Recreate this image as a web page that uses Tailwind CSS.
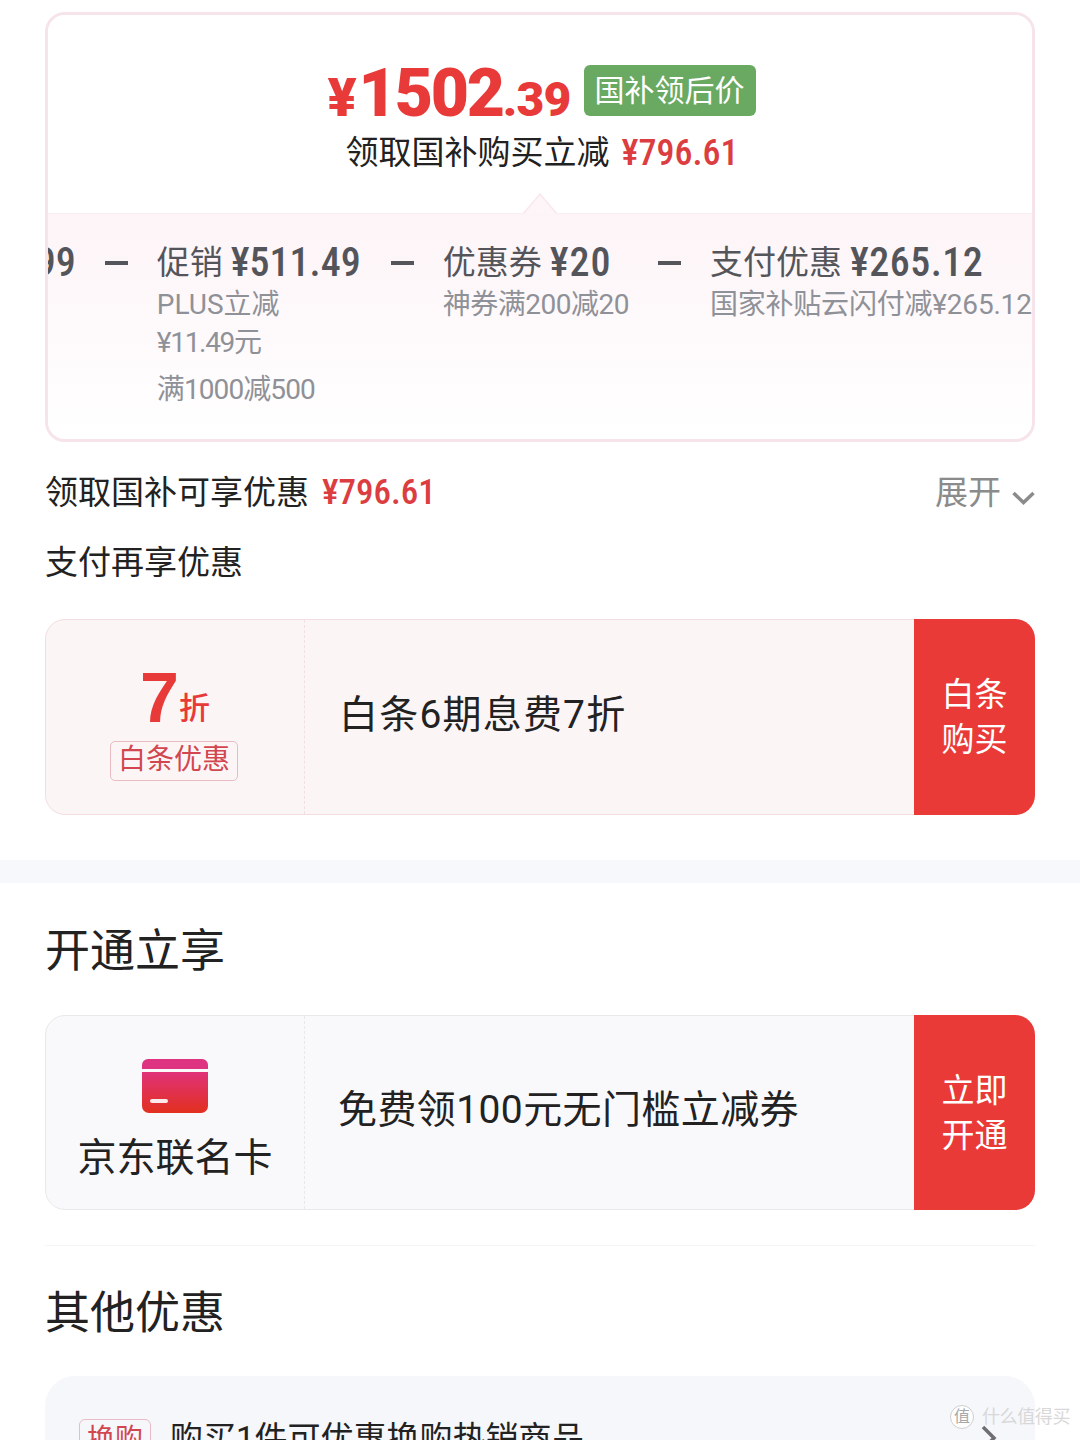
<!DOCTYPE html>
<html lang="zh">
  <head>
    <meta charset="UTF-8" />
    <meta name="viewport" content="width=device-width, initial-scale=1.0" />
    <title>优惠明细</title>
    <script src="https://cdn.jsdelivr.net/npm/@tailwindcss/browser@4"></script>
  </head>
  <body class="bg-white font-['Roboto','Noto_Sans_CJK_SC',sans-serif] text-[#222]">
    <div class="relative h-[1440px] overflow-hidden">

      <section class="px-[45px] pt-3">
        <!-- Price card -->
        <div class="h-[430px] rounded-[20px] border-[3px] border-[#f6e4ea] overflow-hidden">
          <div class="relative h-[199px] border-b border-[#fbeef2] bg-white">
            <div class="flex justify-center items-center gap-[13px] pt-[50px] pl-[3px] h-[101px]">
              <div class="flex items-baseline mt-[7px] font-black text-[#e83a38] leading-none">
                <span class="text-[54px] mr-[2px]">¥</span>
                <span class="text-[66px] tracking-[-2.2px]">1502</span>
                <span class="text-[48px] tracking-[-0.8px]">.39</span>
              </div>
              <span class="w-[172px] h-[51px] rounded-[6px] bg-[#69a962] text-white text-[30px] leading-[51px] text-center">国补领后价</span>
            </div>
            <div class="flex justify-center items-center gap-3 mt-[14px] h-[46px] text-[33px] pl-[4px]">
              <span>领取国补购买立减</span>
              <span class="text-[#dc3d40] font-medium text-[36px] font-['Roboto_Condensed','Roboto',sans-serif]">¥796.61</span>
            </div>
            <svg class="absolute left-[475px] bottom-[-1px]" width="34" height="21" viewBox="0 0 34 21">
              <path d="M0 21 L17 1 L34 21" fill="#fdf5f7" stroke="#f9e8ec" stroke-width="1.5" />
            </svg>
          </div>

          <div class="h-[228px] bg-gradient-to-b from-[#fdf4f7] to-white pt-[27px] overflow-hidden">
            <div class="flex gap-[29px] -ml-[71px] whitespace-nowrap">
              <div>
                <p class="h-[44px] leading-[44px] text-[40px] text-[#54555b] font-medium font-['Roboto_Condensed','Roboto',sans-serif]">¥1799</p>
              </div>
              <div class="w-[23px] h-[4px] mt-[20px] bg-[#54555b] shrink-0"></div>
              <div class="pr-[1px]">
                <p class="flex items-center gap-[8px] h-[44px] text-[33px] text-[#54555b]"><span>促销</span><span class="text-[40px] font-medium font-['Roboto_Condensed','Roboto',sans-serif]">¥511.49</span></p>
                <p class="mt-[1px] leading-[38px] text-[28px] text-[#8f9198]">PLUS立减</p>
                <p class="leading-[38px] text-[28px] tracking-[-1.3px] text-[#8f9198]">¥11.49元</p>
                <p class="mt-[9px] leading-[38px] text-[28px] tracking-[-0.9px] text-[#8f9198]">满1000减500</p>
              </div>
              <div class="w-[23px] h-[4px] mt-[20px] bg-[#54555b] shrink-0"></div>
              <div>
                <p class="flex items-center gap-[8px] h-[44px] text-[33px] text-[#54555b]"><span>优惠券</span><span class="text-[40px] font-medium tracking-[1px] font-['Roboto_Condensed','Roboto',sans-serif]">¥20</span></p>
                <p class="mt-[1px] leading-[38px] text-[28px] tracking-[-0.5px] text-[#8f9198]">神券满200减20</p>
              </div>
              <div class="w-[23px] h-[4px] mt-[20px] bg-[#54555b] shrink-0"></div>
              <div>
                <p class="flex items-center gap-[8px] h-[44px] text-[33px] text-[#54555b]"><span>支付优惠</span><span class="text-[40px] font-medium tracking-[0.5px] font-['Roboto_Condensed','Roboto',sans-serif]">¥265.12</span></p>
                <p class="mt-[1px] leading-[38px] text-[28px] tracking-[-0.2px] text-[#8f9198]">国家补贴云闪付减¥265.12</p>
              </div>
            </div>
          </div>
        </div>

        <div class="flex justify-between items-center h-[46px] mt-[28px] text-[33px]">
          <p class="flex items-center gap-[13px]"><span>领取国补可享优惠</span><span class="text-[#dc3d40] font-medium text-[35px] font-['Roboto_Condensed','Roboto',sans-serif]">¥796.61</span></p>
          <div class="flex items-center gap-[11px] text-[#8b8b8b]">
            <span>展开</span>
            <svg width="23" height="14" viewBox="0 0 23 14" class="mt-[9px]" fill="none" stroke="#8b8b8b" stroke-width="3.5">
              <path d="M1.5 2 L11.5 11.5 L21.5 2" />
            </svg>
          </div>
        </div>
        <p class="h-[46px] leading-[46px] mt-[24px] text-[33px]">支付再享优惠</p>

        <!-- Baitiao card -->
        <div class="flex h-[196px] mt-[33px] rounded-[20px] border border-[#f3dde3] bg-[#fcf5f6]">
          <div class="w-[259px] shrink-0 border-r border-dashed border-[#eee0e4] flex flex-col items-center pt-[43px]">
            <div class="flex items-end h-[70px] text-[#e83a38]">
              <span class="text-[70px] leading-[70px] font-bold font-['Liberation_Sans',sans-serif]">7</span>
              <span class="text-[31px] leading-[48px] font-medium">折</span>
            </div>
            <span class="mt-[8px] -ml-[2px] w-[128px] h-[40px] rounded-[5px] border border-[#e9bcc4] text-[#d2474f] text-[28px] leading-[36px] text-center">白条优惠</span>
          </div>
          <div class="flex-1 flex items-center pl-[34px] text-[39px] tracking-[1.2px] pb-[4px]">白条6期息费7折</div>
          <div class="w-[121px] shrink-0 -m-px rounded-r-[20px] bg-[#ea3a38] text-white text-[33px] leading-[45px] flex flex-col items-center justify-center">
            <span>白条</span>
            <span>购买</span>
          </div>
        </div>
      </section>

      <div class="h-[23px] mt-[45px] bg-[#f7f8fb]"></div>

      <section class="px-[45px]">
        <h2 class="h-[60px] leading-[60px] mt-[39px] text-[45px] font-normal">开通立享</h2>

        <!-- Co-brand card -->
        <div class="flex h-[195px] mt-[33px] rounded-[20px] border border-[#e9e9ec] bg-[#f9f9fc]">
          <div class="w-[259px] shrink-0 border-r border-dashed border-[#e9e9ec] flex flex-col items-center pt-[43px]">
            <svg width="68" height="55" viewBox="0 0 68 55" class="-ml-[1px]">
              <defs>
                <linearGradient id="cardFill" x1="0" y1="0" x2="0" y2="1">
                  <stop offset="0" stop-color="#e0327a" />
                  <stop offset="1" stop-color="#e2301e" />
                </linearGradient>
              </defs>
              <path d="M7 0 H61 A6 6 0 0 1 67 6 V10 H1 V6 A6 6 0 0 1 7 0 Z" fill="#de3380" />
              <path d="M1 13 H67 V47 A7 7 0 0 1 60 54 H8 A7 7 0 0 1 1 47 Z" fill="url(#cardFill)" />
              <rect x="9" y="40" width="18" height="4" rx="2" fill="#fdeaea" />
            </svg>
            <span class="mt-[19px] text-[39px] leading-[50px]">京东联名卡</span>
          </div>
          <div class="flex-1 flex items-center pl-[33px] text-[39px] tracking-[0.4px] pb-[4px]">免费领100元无门槛立减券</div>
          <div class="w-[121px] shrink-0 -m-px rounded-r-[20px] bg-[#ea3a38] text-white text-[33px] leading-[45px] flex flex-col items-center justify-center">
            <span>立即</span>
            <span>开通</span>
          </div>
        </div>

        <div class="h-px mt-[35px] bg-[#f5f5f6]"></div>

        <h2 class="h-[60px] leading-[60px] mt-[38px] text-[45px] font-normal">其他优惠</h2>

        <!-- Other offers -->
        <div class="relative h-[200px] mt-[32px] rounded-[30px] bg-[#f6f7fb] pl-[34px] pt-[43px]">
          <div class="flex items-center gap-[19px]">
            <span class="w-[72px] h-[40px] rounded-[6px] border border-[#e9bcc4] text-[#d2474f] text-[28px] leading-[40px] text-center">换购</span>
            <span class="text-[33px] leading-[40px]">购买1件可优惠换购热销商品</span>
          </div>
          <svg class="absolute right-[38px] top-[49px]" width="16" height="30" viewBox="0 0 16 30" fill="none" stroke="#6f6f72" stroke-width="3.5">
            <path d="M2 2 L13 13 L2 24" />
          </svg>
        </div>
      </section>

      <!-- Watermark -->
      <div class="absolute right-[10px] bottom-[10px] flex items-center gap-2 text-[18px]">
        <span class="w-[24px] h-[24px] rounded-full border border-[#cfcfcf] bg-white/85 text-[#a8a8a8] text-[16px] leading-[22px] text-center">值</span>
        <span class="text-[#d8d8d8] tracking-[-0.4px]">什么值得买</span>
      </div>
    </div>
  </body>
</html>
